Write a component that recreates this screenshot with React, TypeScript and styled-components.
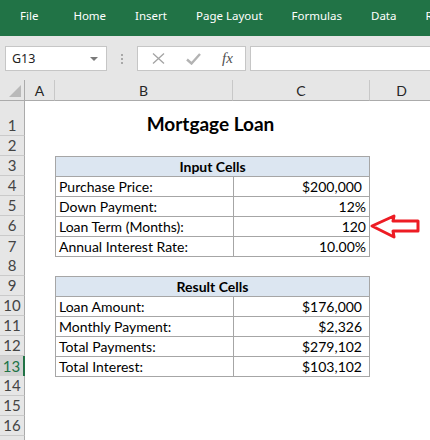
import React from 'react';
import styled, { createGlobalStyle, css } from 'styled-components';

const GlobalStyle = createGlobalStyle`
  html, body {
    margin: 0;
    padding: 0;
    background: #ffffff;
  }
  body {
    font-family: Lato, "Liberation Sans", sans-serif;
  }
`;

const Window = styled.div`
  position: relative;
  width: 430px;
  height: 440px;
  overflow: hidden;
  background: #ffffff;
`;

const Ribbon = styled.div`
  height: 36px;
  background: #217346;
  display: flex;
  align-items: center;
  gap: 29px;
  padding: 0 0 6px 20px;
  box-sizing: border-box;
  white-space: nowrap;
  overflow: hidden;
`;

const Tab = styled.span<{ $first?: boolean }>`
  color: #ffffff;
  font-family: "Noto Sans", "Open Sans", sans-serif;
  font-size: 11.5px;
  ${p => p.$first && css`margin-right: 6px;`}
`;

const FormulaBar = styled.div`
  height: 44px;
  background: #e6e6e6;
  display: flex;
  align-items: center;
  padding: 1px 0 0 5px;
  box-sizing: border-box;
`;

const NameBox = styled.div`
  width: 102px;
  height: 25px;
  box-sizing: border-box;
  background: #ffffff;
  border: 1px solid #c6c6c6;
  display: flex;
  align-items: center;
  justify-content: space-between;
  padding: 0 8px 0 6px;
  font-family: "Noto Sans", "Open Sans", sans-serif;
  font-size: 12.5px;
  color: #222222;
`;

const Caret = styled.span`
  width: 0;
  height: 0;
  border-left: 4px solid transparent;
  border-right: 4px solid transparent;
  border-top: 4px solid #7a7a7a;
`;

const Grip = styled.div`
  width: 30px;
  display: flex;
  flex-direction: column;
  align-items: center;
  gap: 2px;
`;

const GripDot = styled.span`
  width: 2px;
  height: 2px;
  background: #a8a8a8;
`;

const FxBox = styled.div`
  width: 109px;
  height: 25px;
  box-sizing: border-box;
  background: #ffffff;
  border: 1px solid #c6c6c6;
  display: flex;
  align-items: center;
  padding-left: 14px;
  gap: 21px;
`;

const Fx = styled.span`
  font-family: "Liberation Serif", "DejaVu Serif", serif;
  font-style: italic;
  font-size: 15px;
  color: #505050;
`;

const FormulaInput = styled.div`
  flex: 1;
  height: 25px;
  box-sizing: border-box;
  margin-left: 4px;
  background: #ffffff;
  border: 1px solid #c6c6c6;
  border-right: none;
`;

const Row = styled.div<{ $h: number }>`
  display: grid;
  grid-template-columns: 25px 30px 178px 137px 64px 100px;
  height: ${p => p.$h}px;
`;

const Corner = styled.div`
  position: relative;
  background: #e6e6e6;
  border-right: 1px solid #ababab;
  border-bottom: 1px solid #ababab;
  box-sizing: border-box;
  &::after {
    content: '';
    position: absolute;
    right: 3px;
    bottom: 3px;
    border-left: 12px solid transparent;
    border-bottom: 12px solid #b9b9b9;
  }
`;

const ColHead = styled.div`
  background: #e6e6e6;
  border-right: 1px solid #c8c8c8;
  border-bottom: 1px solid #ababab;
  box-sizing: border-box;
  display: flex;
  align-items: center;
  justify-content: center;
  font-size: 14px;
  color: #262626;
  padding-top: 1px;
`;

const RowHead = styled.div<{ $active?: boolean }>`
  background: ${p => (p.$active ? '#d3d3d3' : '#e6e6e6')};
  border-right: ${p => (p.$active ? '2px solid #217346' : '1px solid #ababab')};
  border-bottom: 1px solid #cacaca;
  box-sizing: border-box;
  display: flex;
  align-items: flex-end;
  justify-content: center;
  font-size: 15px;
  line-height: 19px;
  color: ${p => (p.$active ? '#217346' : '#444444')};
`;

const Cell = styled.div<{ $border?: boolean; $left?: boolean; $last?: boolean; $span?: number }>`
  box-sizing: border-box;
  display: flex;
  align-items: flex-end;
  font-size: 14px;
  line-height: 19px;
  color: #000000;
  white-space: nowrap;
  ${p => p.$span && css`grid-column: span ${p.$span};`}
  ${p =>
    p.$border &&
    css`
      border-top: 1px solid #a6a6a6;
      ${p.$left ? 'border-left: 1px solid #a6a6a6;' : ''}
      ${p.$last ? 'border-bottom: 1px solid #a6a6a6;' : ''}
    `}
`;

const LabelCell = styled(Cell)`
  padding-left: 3px;
`;

const ValueCell = styled(Cell)<{ $pad: number }>`
  justify-content: flex-end;
  padding-right: ${p => p.$pad}px;
  border-right: 1px solid #a6a6a6;
`;

const HeadCell = styled(Cell)`
  justify-content: center;
  font-weight: 700;
  background: #dce6f1;
  border-right: 1px solid #a6a6a6;
`;

const TitleCell = styled(Cell)`
  justify-content: center;
  font-size: 19px;
  font-weight: 700;
  line-height: 24px;
  padding-right: 4px;
`;

const Arrow = styled.svg`
  position: absolute;
  left: 368px;
  top: 212px;
`;

type SheetRow =
  | { n: number; kind: 'blank' }
  | { n: number; kind: 'title'; h: number; text: string }
  | { n: number; kind: 'head'; text: string }
  | { n: number; kind: 'data'; label: string; value: string; money?: boolean; last?: boolean };

const rows: SheetRow[] = [
  { n: 1, kind: 'title', h: 35, text: 'Mortgage Loan' },
  { n: 2, kind: 'blank' },
  { n: 3, kind: 'head', text: 'Input Cells' },
  { n: 4, kind: 'data', label: 'Purchase Price:', value: '$200,000', money: true },
  { n: 5, kind: 'data', label: 'Down Payment:', value: '12%' },
  { n: 6, kind: 'data', label: 'Loan Term (Months):', value: '120' },
  { n: 7, kind: 'data', label: 'Annual Interest Rate:', value: '10.00%', last: true },
  { n: 8, kind: 'blank' },
  { n: 9, kind: 'head', text: 'Result Cells' },
  { n: 10, kind: 'data', label: 'Loan Amount:', value: '$176,000', money: true },
  { n: 11, kind: 'data', label: 'Monthly Payment:', value: '$2,326', money: true },
  { n: 12, kind: 'data', label: 'Total Payments:', value: '$279,102', money: true },
  { n: 13, kind: 'data', label: 'Total Interest:', value: '$103,102', money: true, last: true },
  { n: 14, kind: 'blank' },
  { n: 15, kind: 'blank' },
  { n: 16, kind: 'blank' },
];

const tabs = ['File', 'Home', 'Insert', 'Page Layout', 'Formulas', 'Data', 'Review'];

const renderRow = (r: SheetRow) => {
  const h = r.kind === 'title' ? r.h : 20;
  return (
    <Row key={r.n} $h={h}>
      <RowHead $active={r.n === 13}>{r.n}</RowHead>
      <Cell />
      {r.kind === 'title' && <TitleCell $span={2}>{r.text}</TitleCell>}
      {r.kind === 'head' && (
        <HeadCell $span={2} $border $left>
          {r.text}
        </HeadCell>
      )}
      {r.kind === 'data' && (
        <>
          <LabelCell $border $left $last={r.last}>
            {r.label}
          </LabelCell>
          <ValueCell $border $left $last={r.last} $pad={r.money ? 7 : 3}>
            {r.value}
          </ValueCell>
        </>
      )}
      {r.kind === 'blank' && (
        <>
          <Cell />
          <Cell />
        </>
      )}
      <Cell />
      <Cell />
    </Row>
  );
};

const App: React.FC = () => {
  return (
    <Window>
      <GlobalStyle />
      <Ribbon>
        {tabs.map((t, i) => (
          <Tab key={t} $first={i === 0}>
            {t}
          </Tab>
        ))}
      </Ribbon>
      <FormulaBar>
        <NameBox>
          G13
          <Caret />
        </NameBox>
        <Grip>
          <GripDot />
          <GripDot />
          <GripDot />
        </Grip>
        <FxBox>
          <svg width="13" height="11" viewBox="0 0 13 11">
            <path d="M1 0.5 L12 10.5 M12 0.5 L1 10.5" stroke="#a3a3a3" strokeWidth="1.3" fill="none" />
          </svg>
          <svg width="15" height="12" viewBox="0 0 15 12">
            <path d="M1 6.5 L5.5 10.5 L14 1" stroke="#b3b3b3" strokeWidth="2.4" fill="none" />
          </svg>
          <Fx>fx</Fx>
        </FxBox>
        <FormulaInput />
      </FormulaBar>
      <Row $h={21}>
        <Corner />
        <ColHead>A</ColHead>
        <ColHead>B</ColHead>
        <ColHead>C</ColHead>
        <ColHead>D</ColHead>
        <ColHead />
      </Row>
      {rows.map(renderRow)}
      <Row $h={20}>
        <RowHead />
      </Row>
      <Arrow width="54" height="30" viewBox="0 0 54 30">
        <path
          d="M4 14 L26 4 L25 9 L50 9 L50 19 L25 19 L26 25 Z"
          stroke="#ed1c24"
          strokeWidth="3"
          strokeLinejoin="round"
          fill="none"
        />
      </Arrow>
    </Window>
  );
};

export default App;
